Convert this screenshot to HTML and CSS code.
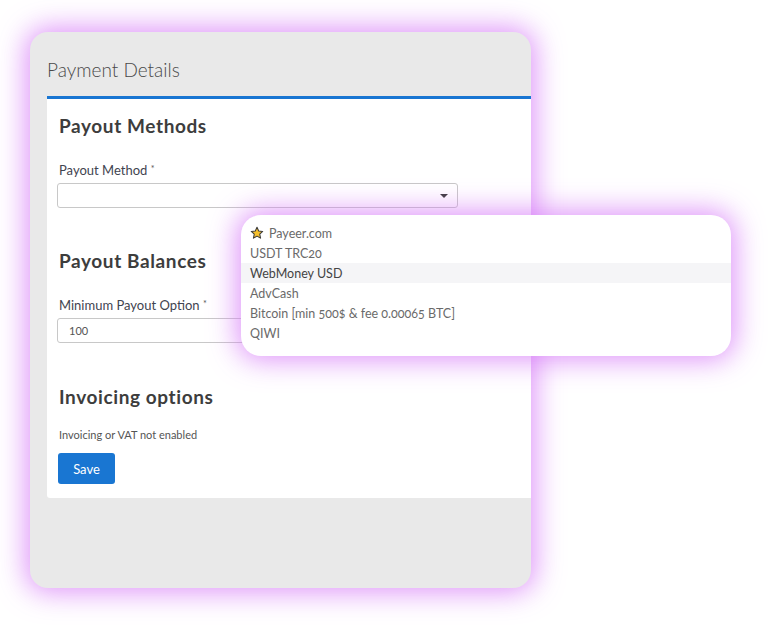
FILE: index.html
```html
<!DOCTYPE html>
<html lang="en">
<head>
    <meta charset="UTF-8">
    <meta name="viewport" content="width=device-width, initial-scale=1.0">
    <title>Payment Details</title>
    <link rel="stylesheet" href="styles.css">
</head>
<body>
    <div class="page">
        <div class="card">
            <h2 class="card-title">Payment Details</h2>
            <div class="panel">
                <section class="group">
                    <h3>Payout Methods</h3>
                    <label class="field-label">Payout Method <span class="req">*</span></label>
                    <div class="select"><span class="caret"></span></div>
                </section>
                <section class="group">
                    <h3>Payout Balances</h3>
                    <label class="field-label">Minimum Payout Option <span class="req">*</span></label>
                    <div class="input">100</div>
                </section>
                <section class="group">
                    <h3>Invoicing options</h3>
                    <p class="note">Invoicing or VAT not enabled</p>
                    <button class="btn">Save</button>
                </section>
            </div>
        </div>

        <ul class="dropdown">
            <li>
                <svg class="star" width="14" height="14" viewBox="0 0 24 24">
                    <path d="M12 2.2l2.9 6.3 6.9.8-5.1 4.7 1.4 6.8L12 17.4l-6.1 3.4 1.4-6.8-5.1-4.7 6.9-.8z" fill="#f6c02c" stroke="#3a3a3a" stroke-width="1.8" stroke-linejoin="round"/>
                </svg>
                Payeer.com
            </li>
            <li>USDT TRC20</li>
            <li class="active">WebMoney USD</li>
            <li>AdvCash</li>
            <li>Bitcoin [min 500$ &amp; fee 0.00065 BTC]</li>
            <li>QIWI</li>
        </ul>
    </div>
</body>
</html>
```

FILE: styles.css
```css
body {
    margin: 0;
    background: #fff;
    font-family: Lato, "Open Sans", sans-serif;
    color: #444;
}
.page {
    position: relative;
    width: 772px;
    height: 630px;
    padding: 32px 0 0 30px;
    box-sizing: border-box;
}
.card {
    width: 501px;
    height: 556px;
    background: #e9e9e9;
    border-radius: 18px;
    box-shadow: 0 0 28px 4px rgba(214, 120, 248, 0.8);
}
.card-title {
    margin: 0;
    padding: 26px 0 14px 17px;
    font-size: 19px;
    line-height: 24px;
    font-weight: 300;
    color: #4a4a4a;
}
.panel {
    margin-left: 17px;
    background: #fff;
    border-top: 3px solid #1976d2;
    border-bottom-left-radius: 3px;
    padding: 0 10px 14px;
}
.group h3 {
    margin: 0;
    font-size: 19px;
    line-height: 24px;
    font-weight: 700;
    letter-spacing: 0.6px;
    color: #3d3d3d;
    padding-left: 2px;
}
.group:nth-child(1) h3 { padding-top: 15px; }
.group:nth-child(2) h3 { padding-top: 41px; }
.group:nth-child(3) h3 { padding-top: 42px; }
.field-label {
    display: block;
    margin-top: 23px;
    padding-left: 2px;
    font-size: 13px;
    line-height: 16px;
    color: #3f4450;
}
.req {
    font-size: 9px;
    vertical-align: 3px;
    color: #555;
}
.select, .input {
    position: relative;
    box-sizing: border-box;
    width: 401px;
    height: 25px;
    margin-top: 5px;
    border: 1px solid #c8c8c8;
    border-radius: 3px;
    background: #fff;
}
.caret {
    position: absolute;
    right: 9px;
    top: 10px;
    border-left: 4px solid transparent;
    border-right: 4px solid transparent;
    border-top: 4px solid #3a3a3a;
}
.input {
    padding-left: 11px;
    font-size: 11px;
    line-height: 23px;
    color: #555;
}
.note {
    margin: 19px 0 0;
    padding-left: 2px;
    font-size: 11px;
    line-height: 14px;
    color: #555;
}
.btn {
    display: block;
    margin-top: 11px;
    margin-left: 1px;
    width: 57px;
    height: 31px;
    border: none;
    border-radius: 3px;
    background: #1976d2;
    color: #fff;
    font-family: inherit;
    font-size: 13px;
}
.dropdown {
    position: absolute;
    left: 241px;
    top: 215px;
    width: 490px;
    height: 141px;
    box-sizing: border-box;
    margin: 0;
    padding: 8px 0 0;
    list-style: none;
    background: #fff;
    border-radius: 20px;
    box-shadow: 0 0 28px 4px rgba(214, 120, 248, 0.8);
}
.dropdown li {
    display: flex;
    align-items: center;
    height: 20px;
    padding-left: 9px;
    font-size: 12.5px;
    color: #6a6a6a;
    font-variant-numeric: oldstyle-nums;
}
.dropdown li.active {
    background: #f5f5f7;
    color: #444;
}
.star {
    margin-right: 5px;
}
```
